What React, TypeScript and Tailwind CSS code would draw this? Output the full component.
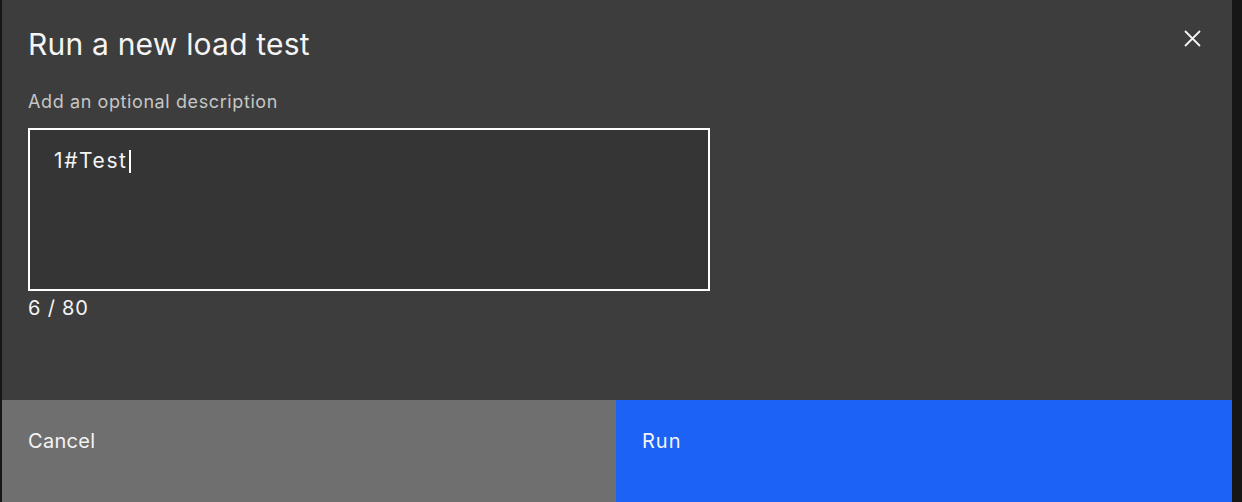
import React from "react";

export default function App() {
  return (
    <div className="w-[1242px] h-[502px] bg-[#161616] flex overflow-hidden" style={{ fontFamily: 'Inter, "Noto Sans", sans-serif' }}>
      <div className="ml-[2px] w-[1230px] h-[502px] bg-[#3d3d3d] flex flex-col">
        <div className="flex-1 relative px-[26px]">
          <button className="absolute right-[31px] top-[29px] w-[18px] h-[18px] flex items-center justify-center text-[#f4f4f4]">
            <svg width="17" height="17" viewBox="0 0 17 17" fill="none" stroke="currentColor" strokeWidth="1.8">
              <path d="M1 1 L16 16 M16 1 L1 16" />
            </svg>
          </button>
          <h1 className="pt-[24px] text-[30px] leading-[40px] tracking-[0.2px] text-[#f4f4f4] font-normal">Run a new load test</h1>
          <div className="mt-[28px] text-[18px] leading-[20px] tracking-[0.6px] text-[#c6c6c6]">Add an optional description</div>
          <div className="mt-[16px] w-[682px] h-[163px] border-2 border-white bg-[#353535] px-[24px] pt-[18px]">
            <div className="flex items-center text-[21px] leading-[26px] tracking-[1.6px] text-[#f4f4f4]">
              <span>1#Test</span>
              <span className="ml-[1px] w-[2px] h-[23px] bg-white" />
            </div>
          </div>
          <div className="mt-[4px] text-[20px] leading-[26px] tracking-[0.8px] text-[#f4f4f4]">6 / 80</div>
        </div>
        <div className="h-[102px] flex">
          <div className="w-[614px] bg-[#6f6f6f] px-[26px] pt-[28px] text-[20px] leading-[26px] tracking-[0.3px] text-[#f4f4f4]">Cancel</div>
          <div className="flex-1 bg-[#1c63f5] px-[26px] pt-[28px] text-[20px] leading-[26px] tracking-[1px] text-[#f4f4f4]">Run</div>
        </div>
      </div>
    </div>
  );
}
